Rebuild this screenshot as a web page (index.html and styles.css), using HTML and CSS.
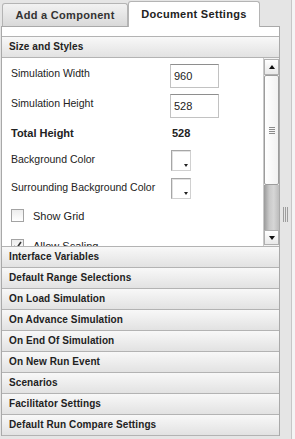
FILE: index.html
```html
<!DOCTYPE html>
<html lang="en">
<head>
  <meta charset="UTF-8" />
  <title>Document Settings</title>
  <link rel="stylesheet" href="styles.css">
</head>
<body>
  <div class="layout">
    <div class="sidebar">
      <div class="tabs">
        <div class="tab">Add a Component</div>
        <div class="tab active">Document Settings</div>
      </div>

      <div class="panel">
        <div class="acc-head">Size and Styles</div>
        <div class="acc-body">
          <div class="form">
            <label class="lbl">Simulation Width</label>
            <div><input class="num" type="text" value="960" /></div>

            <label class="lbl">Simulation Height</label>
            <div><input class="num" type="text" value="528" /></div>

            <div class="lbl strong">Total Height</div>
            <div class="lbl strong total">528</div>

            <label class="lbl">Background Color</label>
            <div><span class="swatch"></span></div>

            <label class="lbl">Surrounding Background Color</label>
            <div><span class="swatch"></span></div>

            <div class="check-row">
              <span class="check"></span>
              <span class="lbl">Show Grid</span>
            </div>

            <div class="check-row">
              <span class="check checked">
                <svg width="11" height="11" viewBox="0 0 11 11"><path d="M2 6 L4.5 8.5 L9 2" fill="none" stroke="#333" stroke-width="1.6"/></svg>
              </span>
              <span class="lbl">Allow Scaling</span>
            </div>
          </div>

          <div class="scrollbar">
            <div class="sb-btn"><span class="arrow up"></span></div>
            <div class="sb-thumb"><i></i><i></i><i></i><i></i></div>
            <div class="sb-track"></div>
            <div class="sb-btn"><span class="arrow down"></span></div>
          </div>
        </div>

        <div class="acc-head">Interface Variables</div>
        <div class="acc-head">Default Range Selections</div>
        <div class="acc-head">On Load Simulation</div>
        <div class="acc-head">On Advance Simulation</div>
        <div class="acc-head">On End Of Simulation</div>
        <div class="acc-head">On New Run Event</div>
        <div class="acc-head">Scenarios</div>
        <div class="acc-head">Facilitator Settings</div>
        <div class="acc-head last">Default Run Compare Settings</div>
      </div>
    </div>

    <div class="splitter"><div class="grip"><i></i><i></i><i></i></div></div>
    <div class="edge"></div>
  </div>
</body>
</html>
```

FILE: styles.css
```css
html, body {
  height: 100%;
}
body {
  margin: 0;
  background: #e5e5e5;
  font-family: 'Liberation Sans', Arial, sans-serif;
  color: #222;
}
.layout {
  display: flex;
  height: 100%;
}
.sidebar {
  width: 279px;
  padding-left: 1px;
}

/* tabs */
.tabs {
  display: flex;
  align-items: flex-end;
  height: 26px;
  padding-left: 1px;
}
.tab {
  box-sizing: border-box;
  height: 23px;
  width: 126px;
  border: 1px solid #b4b4b4;
  border-bottom: none;
  border-radius: 3px 3px 0 0;
  background: linear-gradient(#f2f2f2, #d9d9d9);
  font-size: 11px;
  font-weight: bold;
  letter-spacing: 0.3px;
  color: #333;
  text-align: center;
  line-height: 22px;
}
.tab.active {
  position: relative;
  width: 132px;
  height: 26px;
  margin-bottom: -1px;
  background: #fff;
  line-height: 25px;
  color: #222;
}

/* panel */
.panel {
  width: 279px;
  box-sizing: border-box;
  border: 1px solid #a9a9a9;
  border-bottom: none;
  background: #fff;
  padding-top: 9px;
}
.acc-head {
  height: 20px;
  border-top: 1px solid #b3b3b3;
  background: linear-gradient(#f8f8f8, #e2e2e2);
  padding-left: 7px;
  font-size: 10px;
  font-weight: bold;
  letter-spacing: 0.1px;
  line-height: 20px;
  color: #222;
}
.acc-head.last {
  border-bottom: 1px solid #b3b3b3;
}
.acc-body {
  display: flex;
  height: 189px;
  border-top: 1px solid #b3b3b3;
  box-sizing: border-box;
}

/* form */
.form {
  flex: 1;
  overflow: hidden;
  display: grid;
  grid-template-columns: 159px 1fr;
  grid-template-rows: 30px 30px 26px 28px 31px 30px 20px;
  align-items: start;
  padding: 6px 0 0 9px;
}
.lbl {
  padding-top: 3px;
  font-size: 10.5px;
  line-height: 13px;
  color: #222;
  white-space: nowrap;
}
.strong {
  font-size: 11px;
  font-weight: bold;
}
.total {
  padding-left: 2px;
}
.num {
  box-sizing: border-box;
  width: 49px;
  height: 24px;
  margin: 0;
  padding: 0 0 0 3px;
  border: 1px solid #c2c2c2;
  border-top-color: #8e8e8e;
  font-family: 'Liberation Sans', Arial, sans-serif;
  font-size: 11px;
  color: #222;
  outline: none;
}
.swatch {
  position: relative;
  display: block;
  box-sizing: border-box;
  width: 20px;
  height: 21px;
  margin-left: 1px;
  border: 1px solid #a6a6a6;
  border-right-color: #d0d0d0;
  border-bottom-color: #d0d0d0;
  background: #fff;
  box-shadow: inset 1px 1px 0 #e2e2e2;
}
.swatch::after {
  content: "";
  position: absolute;
  right: 2px;
  bottom: 3px;
  border-left: 2.5px solid transparent;
  border-right: 2.5px solid transparent;
  border-top: 3px solid #222;
}
.check-row {
  grid-column: 1 / -1;
  display: flex;
  align-items: flex-start;
  gap: 9px;
}
.check-row .lbl {
  padding-top: 0;
  line-height: 14px;
  font-size: 11px;
}
.check {
  display: block;
  box-sizing: border-box;
  width: 13px;
  height: 13px;
  border: 1px solid #a3a3a3;
  background: linear-gradient(#ececec, #fff);
}
.check svg {
  display: block;
}

/* fake scrollbar */
.scrollbar {
  width: 15px;
  border-left: 1px solid #c9c9c9;
  background: #f3f3f3;
  display: flex;
  flex-direction: column;
  padding: 1px 0 1px;
}
.sb-btn {
  box-sizing: border-box;
  height: 15px;
  border: 1px solid #b0b0b0;
  background: linear-gradient(#ffffff, #e9e9e9);
  display: flex;
  align-items: center;
  justify-content: center;
}
.sb-btn:first-child {
  height: 16px;
}
.arrow {
  width: 0;
  height: 0;
  border-left: 3.5px solid transparent;
  border-right: 3.5px solid transparent;
}
.arrow.up {
  border-bottom: 4px solid #111;
}
.arrow.down {
  border-top: 4px solid #111;
}
.sb-thumb {
  box-sizing: border-box;
  height: 110px;
  border: 1px solid #9c9c9c;
  border-radius: 2px;
  background: linear-gradient(to right, #ffffff, #f1f1f1);
  display: flex;
  flex-direction: column;
  align-items: center;
  justify-content: center;
  gap: 1px;
}
.sb-thumb i {
  display: block;
  width: 6px;
  height: 1px;
  background: #8a8a8a;
}
.sb-track {
  flex: 1;
  background: linear-gradient(to right, #9a9a9a, #c9c9c9 35%, #d6d6d6 65%, #bcbcbc);
}

/* splitter at the right */
.splitter {
  width: 11px;
  display: flex;
  justify-content: center;
  padding-top: 207px;
  box-sizing: border-box;
}
.grip {
  display: flex;
  gap: 1px;
  height: 15px;
}
.grip i {
  display: block;
  width: 1px;
  height: 15px;
  background: #9d9d9d;
}
.edge {
  flex: 1;
  border-left: 1px solid #c6c6c6;
  background: #f4f4f4;
}
```
